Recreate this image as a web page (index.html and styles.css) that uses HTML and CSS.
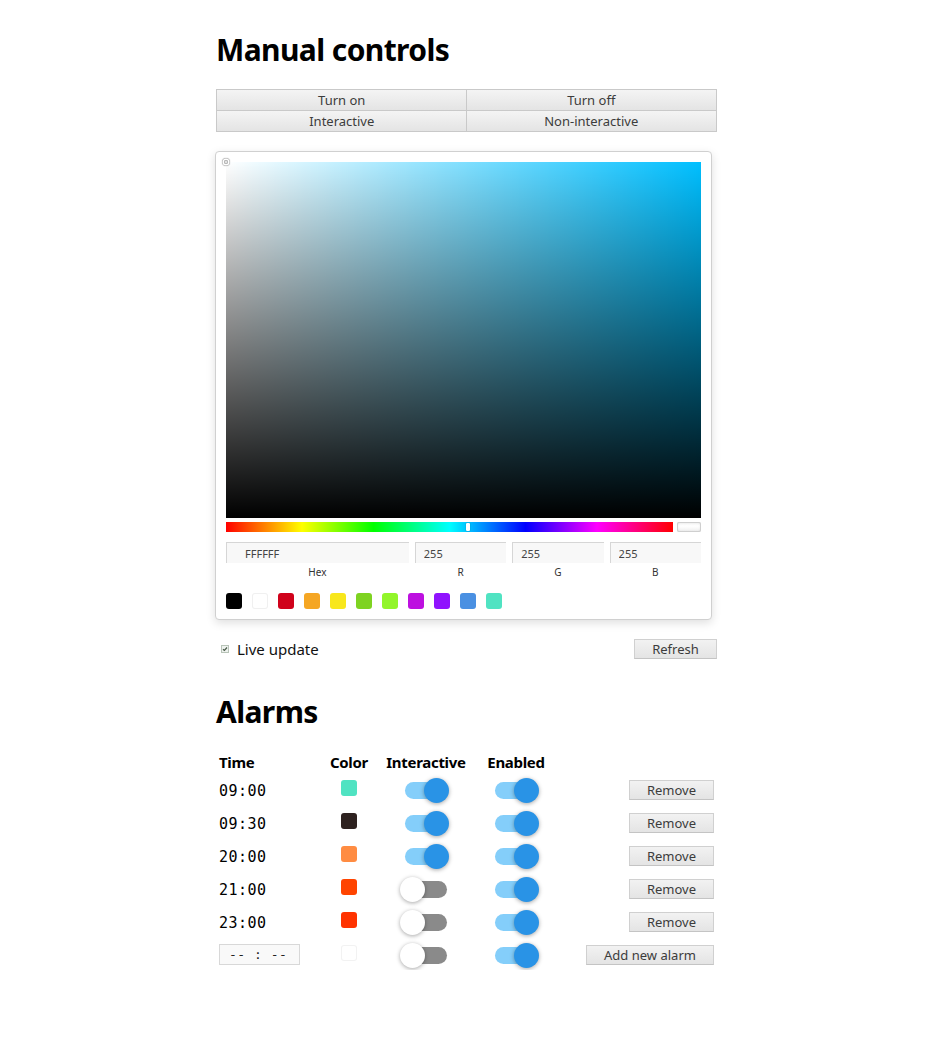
FILE: index.html
```html
<!DOCTYPE html>
<html>
<head>
<meta charset="utf-8">
<link rel="stylesheet" href="styles.css">
</head>
<body>
<main class="page">
  <h1 class="title">Manual controls</h1>
  <div class="btn-grid">
    <button class="btn">Turn on</button>
    <button class="btn">Turn off</button>
    <button class="btn">Interactive</button>
    <button class="btn">Non-interactive</button>
  </div>

  <div class="picker">
    <div class="sv">
      <div class="sv-white"></div>
      <div class="sv-black"></div>
      <div class="sv-pointer"></div>
    </div>
    <div class="hue-row">
      <div class="hue"><div class="hue-thumb"></div></div>
      <div class="preview"></div>
    </div>
    <div class="fields">
      <div class="field hex"><input class="inp inp-hex" value="FFFFFF"><span class="lbl">Hex</span></div>
      <div class="field"><input class="inp" value="255"><span class="lbl">R</span></div>
      <div class="field"><input class="inp" value="255"><span class="lbl">G</span></div>
      <div class="field"><input class="inp" value="255"><span class="lbl">B</span></div>
    </div>
    <div class="swatches">
      <span class="sw" style="background:#000000"></span>
      <span class="sw sw-white" style="background:#ffffff"></span>
      <span class="sw" style="background:#D0021B"></span>
      <span class="sw" style="background:#F5A623"></span>
      <span class="sw" style="background:#F8E71C"></span>
      <span class="sw" style="background:#7ED321"></span>
      <span class="sw" style="background:#92F52A"></span>
      <span class="sw" style="background:#BD10E0"></span>
      <span class="sw" style="background:#9013FE"></span>
      <span class="sw" style="background:#4A90E2"></span>
      <span class="sw" style="background:#50E3C2"></span>
    </div>
  </div>

  <div class="live-row">
    <label class="live"><span class="check"><svg width="8" height="8" viewBox="0 0 8 8"><rect x="0.5" y="0.5" width="7" height="7" fill="#eef2ee" stroke="#b8c4b8"/><path d="M2 4.2 L3.4 5.5 L6 2.5" stroke="#4a5a4a" stroke-width="1.2" fill="none"/></svg></span>Live update</label>
    <button class="btn btn-small refresh">Refresh</button>
  </div>

  <h1 class="title alarms-title">Alarms</h1>
  <table class="alarms">
    <thead>
      <tr><th class="c-time">Time</th><th class="c-color">Color</th><th class="c-int">Interactive</th><th class="c-en">Enabled</th><th class="c-act"></th></tr>
    </thead>
    <tbody>
      <tr><td class="time">09:00</td><td class="c-color"><span class="dot" style="background:#50E3C2"></span></td><td class="c-int"><span class="tg on"><span class="knob"></span></span></td><td class="c-en"><span class="tg on"><span class="knob"></span></span></td><td class="c-act"><button class="btn btn-small rm">Remove</button></td></tr>
      <tr><td class="time">09:30</td><td class="c-color"><span class="dot" style="background:#2e2220"></span></td><td class="c-int"><span class="tg on"><span class="knob"></span></span></td><td class="c-en"><span class="tg on"><span class="knob"></span></span></td><td class="c-act"><button class="btn btn-small rm">Remove</button></td></tr>
      <tr><td class="time">20:00</td><td class="c-color"><span class="dot" style="background:#FF8C42"></span></td><td class="c-int"><span class="tg on"><span class="knob"></span></span></td><td class="c-en"><span class="tg on"><span class="knob"></span></span></td><td class="c-act"><button class="btn btn-small rm">Remove</button></td></tr>
      <tr><td class="time">21:00</td><td class="c-color"><span class="dot" style="background:#FF4400"></span></td><td class="c-int"><span class="tg"><span class="knob"></span></span></td><td class="c-en"><span class="tg on"><span class="knob"></span></span></td><td class="c-act"><button class="btn btn-small rm">Remove</button></td></tr>
      <tr><td class="time">23:00</td><td class="c-color"><span class="dot" style="background:#FF3300"></span></td><td class="c-int"><span class="tg"><span class="knob"></span></span></td><td class="c-en"><span class="tg on"><span class="knob"></span></span></td><td class="c-act"><button class="btn btn-small rm">Remove</button></td></tr>
      <tr><td class="time time-new"><span class="time-inp">-- : --</span></td><td class="c-color"><span class="dot dot-white"></span></td><td class="c-int"><span class="tg"><span class="knob"></span></span></td><td class="c-en"><span class="tg on"><span class="knob"></span></span></td><td class="c-act"><button class="btn btn-small add">Add new alarm</button></td></tr>
    </tbody>
  </table>
</main>
</body>
</html>
```

FILE: styles.css
```css
html, body {
  margin: 0;
  padding: 0;
  background: #ffffff;
}
body {
  font-family: "Noto Sans", "Open Sans", sans-serif;
  color: #000;
}
.page {
  width: 501px;
  margin: 0 auto;
  padding-top: 30px;
}
.title {
  font-family: "Noto Sans", sans-serif;
  font-size: 30px;
  font-weight: 700;
  margin: 0 0 19px 0;
  line-height: 40px;
  letter-spacing: -0.6px;
}
.btn-grid {
  display: grid;
  grid-template-columns: 1fr 1fr;
}
.btn {
  font-family: "Noto Sans", sans-serif;
  font-size: 13px;
  color: #3c3c3c;
  background: linear-gradient(#f4f4f4, #e4e4e4);
  border: 1px solid #c9c9c9;
  border-radius: 0;
  height: 21px;
  padding: 0 6px;
  line-height: 19px;
  margin: 0;
  box-sizing: border-box;
}
.btn-grid .btn {
  height: 22px;
  line-height: 20px;
  margin-top: -1px;
  margin-left: -1px;
  width: calc(100% + 1px);
}
.btn-grid .btn:nth-child(odd) {
  margin-left: 0;
}
.btn-grid .btn:nth-child(-n+2) {
  margin-top: 0;
}

.picker {
  margin-top: 19px;
  width: 497px;
  margin-left: -1px;
  box-sizing: border-box;
  border: 1px solid #d0d0d0;
  border-radius: 4px;
  box-shadow: 0 3px 10px rgba(0,0,0,0.13);
  padding: 10px;
  background: #fff;
}
.sv {
  position: relative;
  height: 356px;
  background: #00bfff;
}
.sv-white {
  position: absolute;
  inset: 0;
  background: linear-gradient(to right, #fff, rgba(255,255,255,0));
}
.sv-black {
  position: absolute;
  inset: 0;
  background: linear-gradient(to bottom, rgba(0,0,0,0), #000);
}
.sv-pointer {
  position: absolute;
  left: -2px;
  top: -2px;
  width: 4px;
  height: 4px;
  border-radius: 50%;
  box-shadow: 0 0 0 1.5px #fff, inset 0 0 1px 1px rgba(0,0,0,0.3), 0 0 1px 2px rgba(0,0,0,0.4);
}
.hue-row {
  display: flex;
  gap: 4px;
  margin-top: 4px;
  height: 10px;
}
.hue {
  position: relative;
  flex: 1;
  background: linear-gradient(to right, #f00 0%, #ff0 17%, #0f0 33%, #0ff 50%, #00f 67%, #f0f 83%, #f00 100%);
}
.hue-thumb {
  position: absolute;
  left: 240px;
  top: 1px;
  width: 4px;
  height: 8px;
  background: #fff;
  border-radius: 1px;
  box-shadow: 0 0 1px rgba(0,0,0,0.6);
}
.preview {
  width: 24px;
  box-sizing: border-box;
  border-radius: 2px;
  background: linear-gradient(#f2f2f2, #ffffff 40%, #eeeeee);
  box-shadow: inset 0 0 0 1px #cfcfcf, inset 0 0 3px rgba(0,0,0,0.15);
}
.fields {
  display: flex;
  gap: 6px;
  margin-top: 10px;
}
.field {
  display: flex;
  flex-direction: column;
  align-items: center;
  flex: 1;
}
.field.hex {
  flex: 2;
}
.inp {
  width: 100%;
  box-sizing: border-box;
  height: 21px;
  border: 1px solid #d6d6d6;
  border-bottom: none;
  border-right: none;
  background: #f8f8f8;
  font-family: "Noto Sans", sans-serif;
  font-size: 11px;
  color: #444;
  padding: 0 0 0 8px;
  margin: 0;
  outline: none;
}
.inp-hex {
  padding-left: 18px;
}
.lbl {
  font-size: 10px;
  color: #333;
  margin-top: 2px;
  line-height: 14px;
}
.swatches {
  display: flex;
  gap: 10px;
  margin-top: 14px;
}
.sw {
  width: 16px;
  height: 16px;
  border-radius: 3px;
  display: block;
}
.sw-white {
  box-shadow: inset 0 0 0 1px #f0f0f0;
}

.live-row {
  display: flex;
  justify-content: space-between;
  align-items: center;
  margin-top: 19px;
}
.live {
  display: flex;
  align-items: center;
  font-size: 15px;
  color: #111;
  padding-left: 5px;
}
.check {
  display: inline-flex;
  margin-right: 8px;
}
.btn-small {
  height: 20px;
  line-height: 18px;
  font-size: 13px;
  background: linear-gradient(#f2f2f2, #e4e4e4);
  border: 1px solid #d0d0d0;
  border-bottom-color: #c4c4c4;
}
.refresh {
  width: 83px;
}
.alarms-title {
  margin-top: 33px;
  margin-bottom: 18px;
}

.alarms {
  border-collapse: collapse;
  width: 500px;
  margin-left: 1px;
}
.alarms th {
  font-size: 15px;
  font-weight: 700;
  text-align: center;
  padding: 0;
  height: 22px;
  vertical-align: bottom;
  white-space: nowrap;
  letter-spacing: -0.3px;
}
.alarms th.c-time {
  text-align: left;
  padding-left: 2px;
}
.alarms td {
  height: 33px;
  padding: 0;
  vertical-align: middle;
}
.c-time { width: 100px; }
.c-color { width: 60px; text-align: center; }
.c-int { width: 94px; text-align: center; }
.c-en { width: 86px; text-align: center; }
.c-act { text-align: right; padding-right: 3px !important; }
.alarms td.time {
  font-family: "DejaVu Sans Mono", monospace;
  font-size: 15px;
  padding-left: 2px;
  padding-top: 4px;
  height: 29px;
  line-height: 20px;
  letter-spacing: 0.5px;
}
.alarms td.time-new {
  padding-top: 0;
  height: 33px;
}
.time-inp {
  display: inline-block;
  width: 81px;
  height: 21px;
  box-sizing: border-box;
  border: 1px solid #d8d8d8;
  background: #f9f9f9;
  font-size: 13px;
  line-height: 19px;
  padding-left: 9px;
  color: #222;
  vertical-align: middle;
  position: relative;
  top: 1px;
}
.dot {
  display: inline-block;
  width: 16px;
  height: 16px;
  border-radius: 3px;
  vertical-align: middle;
  position: relative;
  top: -2px;
}
.dot-white {
  background: #fff;
  box-shadow: inset 0 0 0 1px #f2f2f2;
}
.tg {
  display: inline-block;
  position: relative;
  width: 42px;
  height: 17px;
  border-radius: 9px;
  background: #8a8a8a;
  vertical-align: middle;
}
.tg .knob {
  position: absolute;
  top: -4px;
  left: -5px;
  width: 25px;
  height: 25px;
  border-radius: 50%;
  background: #fff;
  box-shadow: 0 1px 4px rgba(0,0,0,0.35);
}
.tg.on {
  background: #84cefa;
}
.tg.on .knob {
  left: auto;
  right: -2px;
  background: #2993e6;
}
.rm {
  width: 85px;
}
.add {
  width: 128px;
}
```
